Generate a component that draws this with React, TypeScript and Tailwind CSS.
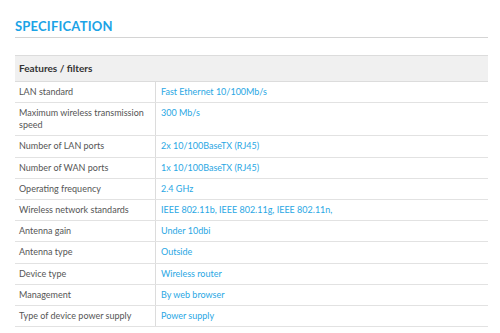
import React from 'react';

const specs: [string, string][] = [
  ['LAN standard', 'Fast Ethernet 10/100Mb/s'],
  ['Maximum wireless transmission speed', '300 Mb/s'],
  ['Number of LAN ports', '2x 10/100BaseTX (RJ45)'],
  ['Number of WAN ports', '1x 10/100BaseTX (RJ45)'],
  ['Operating frequency', '2.4 GHz'],
  ['Wireless network standards', 'IEEE 802.11b, IEEE 802.11g, IEEE 802.11n,'],
  ['Antenna gain', 'Under 10dbi'],
  ['Antenna type', 'Outside'],
  ['Device type', 'Wireless router'],
  ['Management', 'By web browser'],
  ['Type of device power supply', 'Power supply'],
];

export default function App() {
  return (
    <div className="w-[500px] h-[333px] overflow-hidden bg-white font-['Lato',sans-serif]">
      <div className="ml-[15px] w-[473px] pt-[18px]">
        <h2 className="text-[13px] leading-[16px] font-bold text-[#1ba3e6] tracking-[0.2px] pb-[3px] border-b border-[#d4d4d4]">
          SPECIFICATION
        </h2>

        <div className="mt-[17px] border-t border-[#dcdcdc]">
          <div className="bg-[#f0f0f0] h-[26px] flex items-center px-[4px] border-b border-[#dcdcdc]">
            <span className="text-[10px] font-bold text-[#333]">Features / filters</span>
          </div>
          {specs.map(([label, value]) => (
            <div key={label} className="flex border-b border-[#e2e2e2] text-[9px] leading-[12px]">
              <div className="w-[141px] shrink-0 px-[4px] py-[4.1px] text-[#555] border-r border-[#dcdcdc]">
                {label}
              </div>
              <div className="flex-1 px-[5px] py-[4.1px] text-[#2aa7e4]">{value}</div>
            </div>
          ))}
        </div>
      </div>
    </div>
  );
}
